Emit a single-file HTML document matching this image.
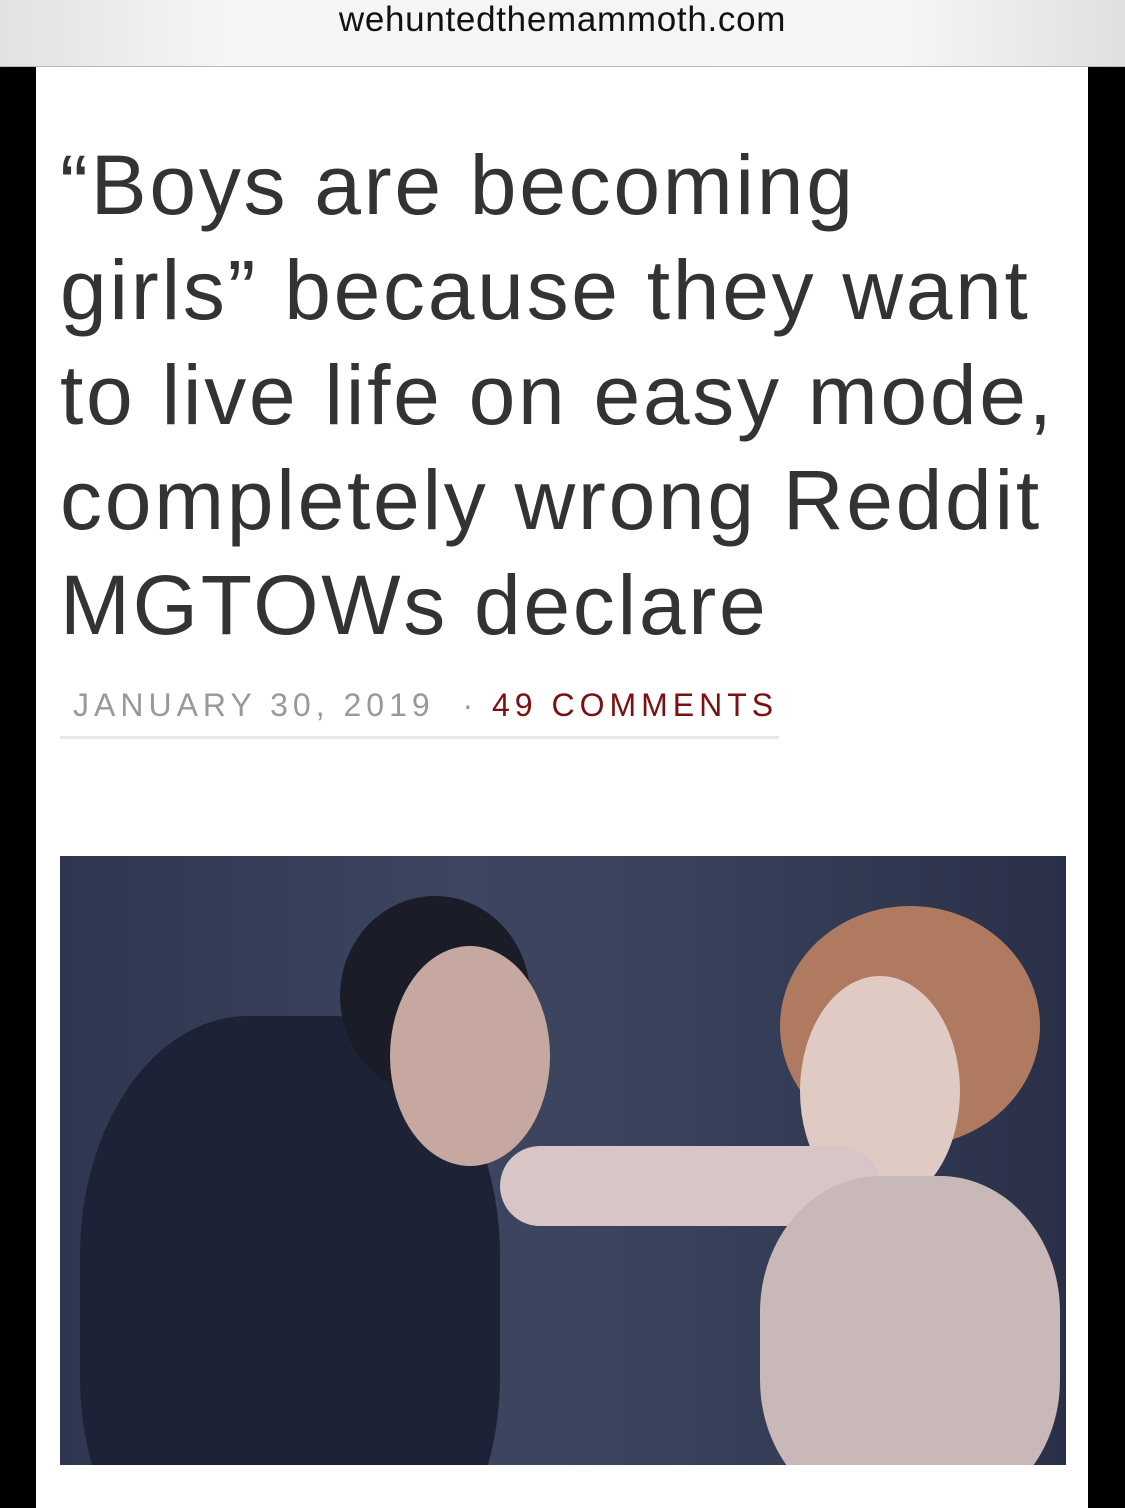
<!DOCTYPE html>
<html><head><meta charset="utf-8"><style>
*{margin:0;padding:0;box-sizing:border-box}
body{width:1125px;height:1508px;overflow:hidden;background:#000;font-family:"Liberation Sans",sans-serif;position:relative}
.top{position:absolute;left:0;top:0;width:1125px;height:67px;background:linear-gradient(90deg,#e2e2e2,#f7f4f4 20%,#f6f6f6 80%,#e0e0e0);border-bottom:1px solid #b8b8b8}
.top span{position:absolute;left:0;right:0;top:0;text-align:center;font-size:35px;color:#111;letter-spacing:0.7px}
.page{position:absolute;left:36px;top:67px;width:1052px;height:1441px;background:#fff;overflow:hidden}
h1{position:absolute;left:24px;top:66px;width:1030px;font-weight:normal;font-size:84px;line-height:105px;color:#333;letter-spacing:2.7px;white-space:nowrap}
.meta{position:absolute;left:24px;top:620px;width:719px;height:52px;border-bottom:3px solid #e8e8e8;font-size:32px;letter-spacing:5px;color:#999;padding-left:13px;white-space:nowrap}
.meta b{font-weight:normal;color:#7a1010}
.img{position:absolute;left:24px;top:789px;width:1006px;height:609px;background:linear-gradient(90deg,#2f3650,#3d4560 40%,#3a425c 60%,#2a3048);overflow:hidden}
.img div{position:absolute;border-radius:50%}
</style></head><body>
<div class="top"><span>wehuntedthemammoth.com</span></div>
<div class="page">
<h1>“Boys are becoming<br>girls” because they want<br>to live life on easy mode,<br>completely wrong Reddit<br>MGTOWs declare</h1>
<div class="meta">JANUARY 30, 2019 &nbsp;· <b>49 COMMENTS</b></div>
<div class="img">
<div style="left:20px;top:160px;width:420px;height:600px;background:#1e2236;border-radius:40%"></div>
<div style="left:280px;top:40px;width:190px;height:200px;background:#1a1c28"></div>
<div style="left:330px;top:90px;width:160px;height:220px;background:#c7a8a0"></div>
<div style="left:720px;top:50px;width:260px;height:240px;background:#b07a60"></div>
<div style="left:740px;top:120px;width:160px;height:230px;background:#e0cac4"></div>
<div style="left:440px;top:290px;width:380px;height:80px;background:#d8c6c6;border-radius:40px"></div>
<div style="left:700px;top:320px;width:300px;height:340px;background:#c9b8b8;border-radius:40%"></div>
</div>
</div>
</body></html>
